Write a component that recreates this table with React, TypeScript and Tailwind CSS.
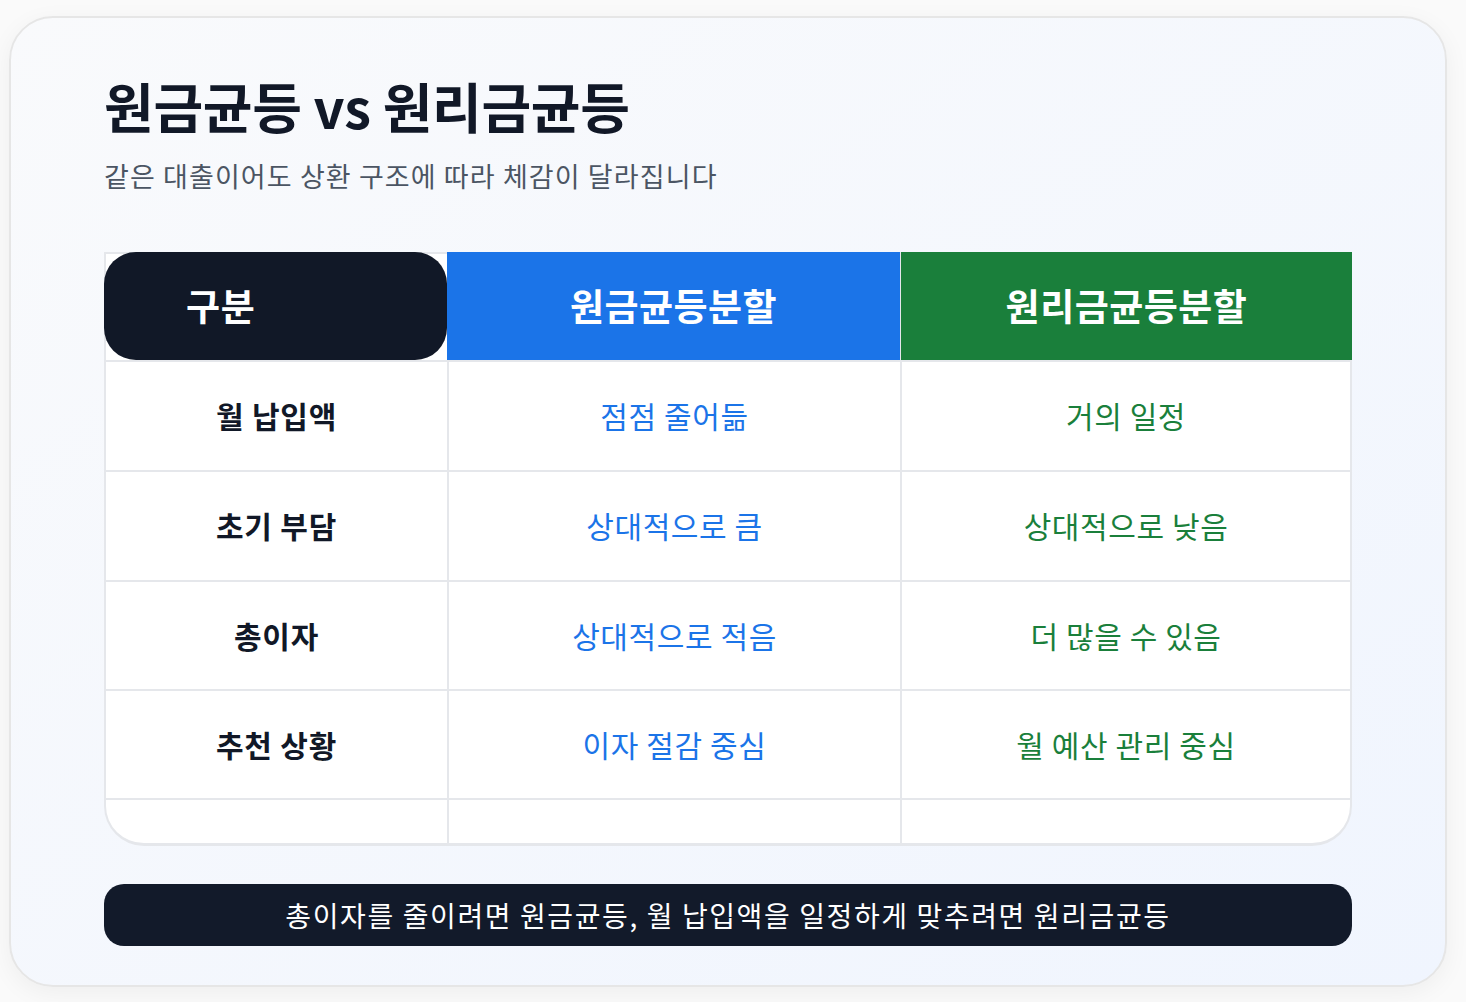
import React from 'react';

const rows = [
  { label: '월 납입액', a: '점점 줄어듦', b: '거의 일정', h: 'h-[110px]' },
  { label: '초기 부담', a: '상대적으로 큼', b: '상대적으로 낮음', h: 'h-[110px]' },
  { label: '총이자', a: '상대적으로 적음', b: '더 많을 수 있음', h: 'h-[109px]' },
  { label: '추천 상황', a: '이자 절감 중심', b: '월 예산 관리 중심', h: 'h-[109px]' },
];

const font = { fontFamily: '"Noto Sans CJK KR", "Noto Sans", sans-serif' };

export default function App() {
  return (
    <div className="min-h-screen w-full bg-[#fafafa] pl-[9px] pt-[16px]" style={font}>
      <div className="w-[1438px] h-[971px] rounded-[44px] border-2 border-[#e6e6e6] bg-gradient-to-br from-[#f9fafc] to-[#f0f5fe] shadow-[0_6px_24px_rgba(0,0,0,0.05)] px-[93px] pt-[56px]">
        <h1 className="text-[54px] font-bold leading-[1.2] text-[#111827] tracking-[-0.3px]">
          원금균등 vs 원리금균등
        </h1>
        <p className="mt-[19px] text-[27px] leading-[1.3] tracking-[1.1px] text-[#4b5563]">
          같은 대출이어도 상환 구조에 따라 체감이 달라집니다
        </p>

        <div className="mt-[59px] w-[1248px] rounded-b-[40px] border-2 border-b-[3px] border-[#e5e7eb] bg-white">
          <div className="grid grid-cols-[341px_453px_450px] h-[108px] -mt-[2px]">
            <div className="flex items-center rounded-[32px] bg-[#111827] pl-[82px] -ml-[2px] w-[343px] text-[37px] tracking-[0.8px] font-bold text-white">
              구분
            </div>
            <div className="flex items-center justify-center bg-[#1b74e8] text-[37px] tracking-[0.5px] font-bold text-white">
              원금균등분할
            </div>
            <div className="flex items-center justify-center bg-[#1a7f3b] -mr-[2px] border-l border-[#e5e7eb] text-[37px] tracking-[0.5px] font-bold text-white">
              원리금균등분할
            </div>
          </div>
          {rows.map((r) => (
            <div key={r.label} className={`grid grid-cols-[341px_453px_450px] ${r.h} border-t-2 border-[#e5e7eb]`}>
              <div className="flex items-center justify-center text-[30px] tracking-[0.8px] font-bold text-[#111827]">
                {r.label}
              </div>
              <div className="flex items-center justify-center border-l-2 border-[#e5e7eb] text-[30px] tracking-[0.6px] text-[#1b74e8]">
                {r.a}
              </div>
              <div className="flex items-center justify-center border-l-2 border-[#e5e7eb] text-[30px] tracking-[0.6px] text-[#1a7f3b]">
                {r.b}
              </div>
            </div>
          ))}
          <div className="grid grid-cols-[341px_453px_450px] h-[45px] border-t-2 border-[#e5e7eb]">
            <div />
            <div className="border-l-2 border-[#e5e7eb]" />
            <div className="border-l-2 border-[#e5e7eb]" />
          </div>
        </div>

        <div className="mt-[38px] flex h-[62px] w-[1248px] items-center justify-center rounded-[20px] bg-[#121a2a] text-[28px] tracking-[1.6px] text-white">
          총이자를 줄이려면 원금균등, 월 납입액을 일정하게 맞추려면 원리금균등
        </div>
      </div>
    </div>
  );
}
